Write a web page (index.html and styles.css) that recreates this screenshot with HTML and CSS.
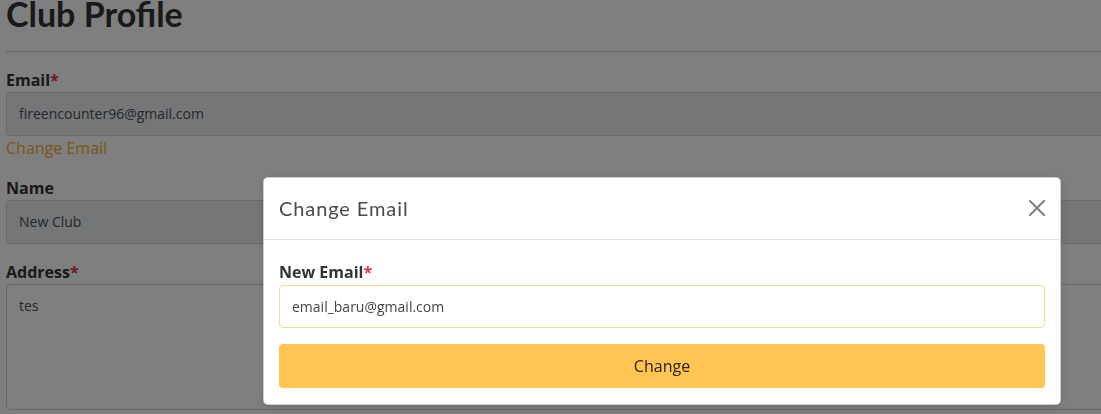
FILE: index.html
```html
<!DOCTYPE html>
<html lang="en">
<head>
<meta charset="utf-8">
<title>Club Profile</title>
<link rel="stylesheet" href="styles.css">
</head>
<body>
<main class="page">
  <h1 class="page-title">Club Profile</h1>
  <hr class="divider">
  <form class="profile-form">
    <div class="form-group">
      <label class="form-label">Email<span class="req">*</span></label>
      <div class="form-control disabled">fireencounter96@gmail.com</div>
      <a class="link" href="#">Change Email</a>
    </div>
    <div class="form-group">
      <label class="form-label">Name</label>
      <div class="form-control disabled">New Club</div>
    </div>
    <div class="form-group">
      <label class="form-label">Address<span class="req">*</span></label>
      <div class="form-control textarea">tes</div>
    </div>
  </form>
</main>

<div class="backdrop"></div>

<div class="modal" role="dialog">
  <div class="modal-header">
    <h5 class="modal-title">Change Email</h5>
    <button class="btn-close" type="button" aria-label="Close">
      <svg viewBox="0 0 16 16" width="16" height="16"><path d="M.293.293a1 1 0 0 1 1.414 0L8 6.586 14.293.293a1 1 0 1 1 1.414 1.414L9.414 8l6.293 6.293a1 1 0 0 1-1.414 1.414L8 9.414l-6.293 6.293a1 1 0 0 1-1.414-1.414L6.586 8 .293 1.707a1 1 0 0 1 0-1.414z" fill="#000"/></svg>
    </button>
  </div>
  <div class="modal-body">
    <label class="form-label">New Email<span class="req">*</span></label>
    <div class="form-control focus">email_baru@gmail.com</div>
    <button class="btn-change" type="button">Change</button>
  </div>
</div>
</body>
</html>
```
FILE: styles.css
```css
* { box-sizing: border-box; }
html, body { margin: 0; padding: 0; }
body {
  background: #fff;
  font-family: "Open Sans", "Liberation Sans", sans-serif;
  color: #333;
  overflow: hidden;
  width: 1101px;
  height: 414px;
}
.page {
  width: 1140px;
  padding-left: 6px;
}
.page-title {
  font-family: "Lato", "Open Sans", sans-serif;
  font-weight: 700;
  font-size: 34px;
  line-height: 28px;
  margin: 0;
  color: #333;
}
.divider {
  border: 0;
  border-top: 1px solid #ccc;
  margin: 23px 0 16px 0;
}
.form-group { margin-bottom: 16px; }
.form-label {
  display: block;
  font-weight: 700;
  font-size: 16px;
  line-height: 24px;
  color: #333;
}
.req { color: #dc3545; }
.form-control {
  font-size: 14px;
  line-height: 21px;
  padding: 10px 12px;
  height: 44px;
  border: 1px solid #ced4da;
  border-radius: 4px;
  color: #495057;
  background: #fff;
}
.form-control.disabled { background: #e9ecef; }
.form-control.textarea {
  height: 126px;
  padding-top: 10px;
}
.link {
  display: block;
  font-size: 16px;
  line-height: 24px;
  color: #f5ad2a;
  text-decoration: none;
}
.backdrop {
  position: fixed;
  inset: 0;
  background: rgba(0, 0, 0, 0.5);
}
.modal {
  position: absolute;
  left: 263px;
  top: 177px;
  width: 798px;
  background: #fff;
  border: 1px solid rgba(0, 0, 0, 0.2);
  border-radius: 5px;
  box-shadow: 0 2px 6px rgba(0,0,0,0.15);
}
.modal-header {
  display: flex;
  align-items: center;
  justify-content: space-between;
  padding: 14px 15px 16px 15px;
  border-bottom: 1px solid #dee2e6;
  height: 62px;
}
.modal-title {
  margin: 0;
  font-family: "Lato", "Open Sans", sans-serif;
  font-weight: 400;
  font-size: 20px;
  line-height: 30px;
  letter-spacing: 0.9px;
  color: #4a4a4a;
}
.btn-close {
  border: 0;
  background: transparent;
  padding: 0;
  width: 16px;
  height: 16px;
  opacity: 0.5;
  display: flex;
}
.modal-body {
  padding: 20px 15px 16px 15px;
}
.modal-body .form-label { margin-bottom: 1px; }
.form-control.focus {
  height: 43px;
  border-color: #f7da93;
  color: #444;
}
.btn-change {
  display: block;
  width: 100%;
  margin-top: 16px;
  height: 44px;
  border: 0;
  border-radius: 4px;
  background: #ffc451;
  color: #2b2416;
  font-family: "Open Sans", "Liberation Sans", sans-serif;
  font-size: 16px;
}
```
